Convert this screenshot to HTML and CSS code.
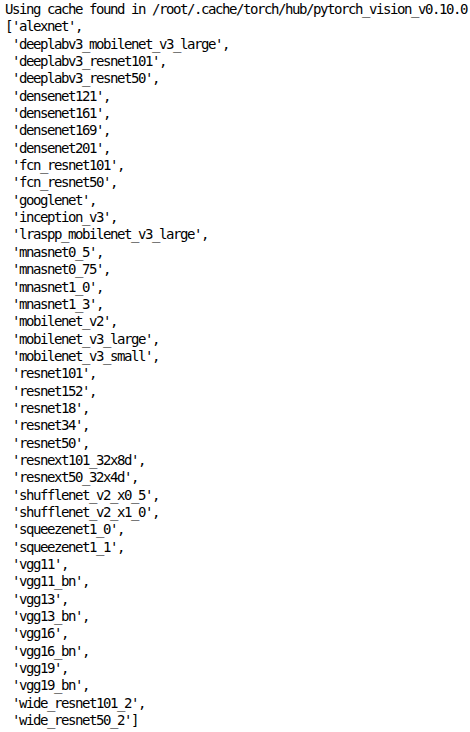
FILE: index.html
```html
<!DOCTYPE html>
<html>
<head>
<meta charset="utf-8">
<link rel="stylesheet" href="styles.css">
</head>
<body>
<pre class="out">Using cache found in /root/.cache/torch/hub/pytorch_vision_v0.10.0
['alexnet',
 'deeplabv3_mobilenet_v3_large',
 'deeplabv3_resnet101',
 'deeplabv3_resnet50',
 'densenet121',
 'densenet161',
 'densenet169',
 'densenet201',
 'fcn_resnet101',
 'fcn_resnet50',
 'googlenet',
 'inception_v3',
 'lraspp_mobilenet_v3_large',
 'mnasnet0_5',
 'mnasnet0_75',
 'mnasnet1_0',
 'mnasnet1_3',
 'mobilenet_v2',
 'mobilenet_v3_large',
 'mobilenet_v3_small',
 'resnet101',
 'resnet152',
 'resnet18',
 'resnet34',
 'resnet50',
 'resnext101_32x8d',
 'resnext50_32x4d',
 'shufflenet_v2_x0_5',
 'shufflenet_v2_x1_0',
 'squeezenet1_0',
 'squeezenet1_1',
 'vgg11',
 'vgg11_bn',
 'vgg13',
 'vgg13_bn',
 'vgg16',
 'vgg16_bn',
 'vgg19',
 'vgg19_bn',
 'wide_resnet101_2',
 'wide_resnet50_2']</pre>
</body>
</html>
```
FILE: styles.css
```css
html, body {
  margin: 0;
  padding: 0;
  background: #ffffff;
}
.out {
  margin: 0;
  padding: 1px 0 0 5px;
  font-family: "DejaVu Sans Mono", monospace;
  font-size: 14px;
  letter-spacing: -1.43px;
  line-height: 17.35px;
  color: #000000;
  white-space: pre;
}
```
